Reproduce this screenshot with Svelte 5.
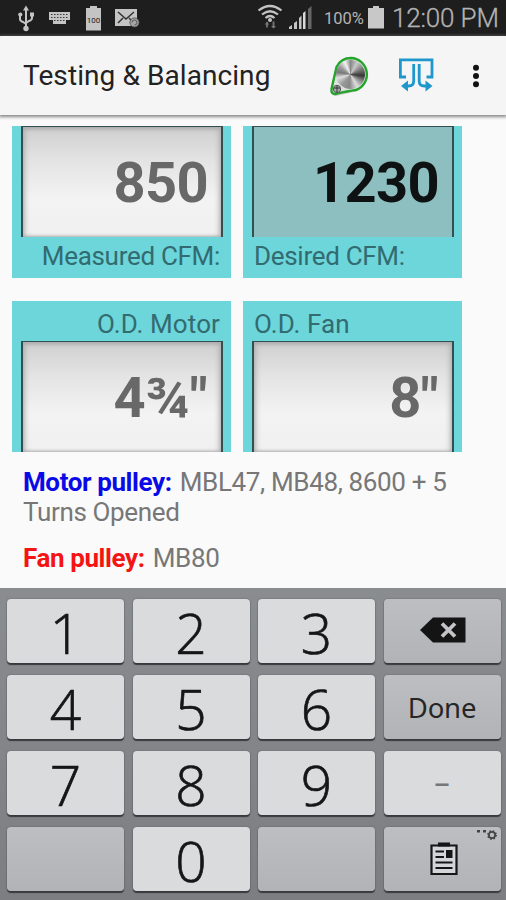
<script>
    import { writable } from 'svelte/store';

    // CFM fields, label sits below the box
    const airflow = [
        { id: 'measured', label: 'Measured CFM:', value: '850', side: 'right' },
        { id: 'desired', label: 'Desired CFM:', value: '1230', side: 'left' },
    ];

    // pulley outside diameters, label sits above the box
    const diameters = [
        { id: 'motor', label: 'O.D. Motor', value: '4¾"', side: 'right' },
        { id: 'fan', label: 'O.D. Fan', value: '8"', side: 'left' },
    ];

    const keys = [
        { type: 'digit', text: '1' },
        { type: 'digit', text: '2' },
        { type: 'digit', text: '3' },
        { type: 'delete' },
        { type: 'digit', text: '4' },
        { type: 'digit', text: '5' },
        { type: 'digit', text: '6' },
        { type: 'done', text: 'Done' },
        { type: 'digit', text: '7' },
        { type: 'digit', text: '8' },
        { type: 'digit', text: '9' },
        { type: 'minus', text: '–' },
        { type: 'blank' },
        { type: 'digit', text: '0' },
        { type: 'blank' },
        { type: 'clipboard' },
    ];

    const selected = writable('desired');
</script>

<div class="screen">
    <div class="status-bar">
        <svg class="status-left" width="160" height="36" viewBox="0 0 160 36">
            <g fill="none" stroke="#c4c4c4" stroke-width="2">
                <path d="M26 8V29M20 15v4q0 2 3 3l3 2M32 14v4q0 2-3 3l-3 2" />
            </g>
            <g fill="#c4c4c4">
                <path d="M26 5.500l3 5h-6z" />
                <circle cx="26" cy="28.500" r="2.700" />
                <circle cx="20.300" cy="14.500" r="2.100" />
                <path d="M30 12.500h4v4h-4z" />
                <path d="M49 12h21v8h-4v4h-13v-4h-4z" />
                <path d="M90 6h7v2h4v22.500H86V8h4z" />
                <path d="M115 9h22v17h-22z" />
            </g>
            <path d="M51 14.500h17M51 17.500h17M54 20.500h11" stroke="#3a3a3a" stroke-width="1" stroke-dasharray="1.500 1.500" />
            <path d="M118 12l8 7 8-7M118 23l5-5M133 22l-4-4" fill="none" stroke="#333" stroke-width="1.500" />
            <circle cx="134.500" cy="22.500" r="4.600" fill="#a5a5a5" stroke="#444" stroke-width="0.800" />
            <path d="M132 22.500a2.500 2.500 0 1 1 2.500 2.500" fill="none" stroke="#555" />
            <text class="tiny" x="93.500" y="22.500" text-anchor="middle">100</text>
        </svg>
        <div class="status-right">
            <svg width="58" height="36" viewBox="256 0 58 36">
                <g fill="none" stroke="#c4c4c4" stroke-width="2.200">
                    <path d="M258.500 10.500q11.500-9 23 0M262 14.500q8-6.500 16 0M265.500 18q4.500-4 9 0" />
                </g>
                <circle cx="270" cy="20" r="2" fill="#c4c4c4" />
                <path d="M264.500 24.500l2.500-2.500 2.500 2.500zM271 26l2.500 2.500 2.500-2.500z" fill="#777" />
                <path d="M267 22v5.500M273.500 21.500v6" stroke="#777" stroke-width="1.800" />
                <path d="M289 29v-2l3-2v4zM294 29v-6l3-2v8zM299 29V18l2.500-2.500V29z" fill="#c4c4c4" />
                <path d="M303 29V13l2.500-2V29z" fill="#d8d8d8" />
                <path d="M308 29V9l3.500-3v23z" fill="#666" />
            </svg>
            <span class="percent">100%</span>
            <svg width="18" height="36" viewBox="0 0 18 36">
                <path d="M6 6h6v2h5v20.500H1V8h5z" fill="#c8c8c8" />
            </svg>
            <span class="clock">12:00 PM</span>
        </div>
    </div>

    <header class="app-bar">
        <h1 class="title">Testing &amp; Balancing</h1>
        <div class="pulley">
            <svg width="44" height="44" viewBox="328 53 44 44">
                <path d="M336.500 68Q341 58.500 351 58.500A16.500 16.500 0 0 1 357 90Q350 92 336 95Q330.500 94.500 331.500 88z" fill="#9a9a9a" opacity="0.450" />
                <path d="M336.500 66Q341 57 351 57A16.500 16.500 0 0 1 356 89Q348 90 335 93Q331 93 331.500 88z" fill="#dce3dc" stroke="#24a52b" stroke-width="2.400" />
                <circle cx="337" cy="88" r="3.700" fill="#aaa" stroke="#555" />
                <path d="M334 87h6M337 85v6" stroke="#333" />
            </svg>
            <span class="disc"></span>
        </div>
        <svg class="duct" width="36" height="36" viewBox="399 57 36 36" fill="none" stroke="#1e98cc" stroke-width="2.800">
            <path d="M406 77h-5.600V59.900H432V77h-5.500" />
            <path d="M413.700 64v17q0 5-5 5H406M419.200 64v17q0 5 5 5H427" />
            <path d="M401 86l7-5.500v11zM432.500 86l-7-5.500v11z" fill="#1e98cc" stroke="none" />
        </svg>
        <svg class="more" width="10" height="26" viewBox="0 0 10 26" fill="#111">
            <circle cx="5" cy="4.700" r="3" />
            <circle cx="5" cy="13" r="3" />
            <circle cx="5" cy="21.300" r="3" />
        </svg>
    </header>

    <main class="content">
        <div class="cards">
            {#each airflow as field}
                <div class="card card-airflow">
                    <div class="value" class:selected={$selected === field.id}>{field.value}</div>
                    <div class="label {field.side}">{field.label}</div>
                </div>
            {/each}
        </div>
        <div class="cards">
            {#each diameters as field}
                <div class="card card-diameter">
                    <div class="label {field.side}">{field.label}</div>
                    <div class="value" class:selected={$selected === field.id}>{field.value}</div>
                </div>
            {/each}
        </div>
        <p class="result"><b class="motor-name">Motor pulley:</b> MBL47, MB48, 8600 + 5<br />Turns Opened</p>
        <p class="result fan-result"><b class="fan-name">Fan pulley:</b> MB80</p>
    </main>

    <div class="keypad">
        {#each keys as key}
            <button class="key {key.type}">
                {#if key.type === 'delete'}
                    <svg width="46" height="26" viewBox="0 0 46 26">
                        <path d="M0 13L13 .5h32.500v25H13z" fill="#141414" />
                        <path d="M22 6.500l13 13M35 6.500l-13 13" stroke="#c3c4c7" stroke-width="3.800" />
                    </svg>
                {:else if key.type === 'clipboard'}
                    <svg width="28" height="34" viewBox="0 0 28 34">
                        <path d="M1.500 3.500h25v28.500h-25z" fill="#d3d5d8" stroke="#151515" stroke-width="2.200" />
                        <path d="M8 .5h12v4H8zM16 8h6.500v8H16z" fill="#151515" />
                        <path d="M5.500 9.500h8.500M5.500 15h8.500M5.500 20.500h17M5.500 26h17" stroke="#151515" stroke-width="2.200" />
                    </svg>
                    <svg class="options" width="22" height="12" viewBox="0 0 22 12">
                        <path d="M1 1h3v2.500H1zM7 1h3v2.500H7z" fill="#444" />
                        <circle cx="16" cy="6" r="3.100" fill="none" stroke="#444" stroke-width="1.800" />
                        <circle cx="16" cy="6" r="4.300" fill="none" stroke="#444" stroke-width="1.200" stroke-dasharray="1.700 1.700" />
                    </svg>
                {:else if key.text}
                    <span>{key.text}</span>
                {/if}
            </button>
        {/each}
    </div>
</div>

<style>
    :global(body) {
        margin: 0;
    }
    .screen {
        width: 506px;
        height: 900px;
        display: flex;
        flex-direction: column;
        overflow: hidden;
        background: #fafafa;
        font-family: Roboto, "Liberation Sans", sans-serif;
    }
    .status-bar {
        height: 36px;
        flex: none;
        display: flex;
        justify-content: space-between;
        background: #1e1e1e;
        color: #b4b4b4;
        box-sizing: border-box;
        border-bottom: 1px solid #090909;
    }
    .status-bar svg {
        flex: none;
    }
    .tiny {
        font-size: 8px;
        font-weight: 400;
        fill: #222;
    }
    .status-right {
        display: flex;
        align-items: flex-start;
        padding-right: 10px;
    }
    .percent {
        width: 43px;
        padding-left: 10px;
        font-size: 16.5px;
        line-height: 38px;
    }
    .clock {
        width: 104px;
        margin-left: 7px;
        font-size: 26px;
        font-weight: 300;
        line-height: 37px;
        letter-spacing: -0.15px;
        white-space: nowrap;
        -webkit-text-stroke: 0.3px #b4b4b4;
    }
    .app-bar {
        height: 79px;
        flex: none;
        display: flex;
        align-items: center;
        background: #f5f5f5;
        box-shadow: 0 1px 3px 1px #888;
    }
    .title {
        width: 305px;
        margin: 0;
        padding: 0 0 0 23px;
        font-size: 28px;
        font-weight: 400;
        line-height: 38px;
        letter-spacing: 0.08px;
        color: #222;
        white-space: nowrap;
    }
    .pulley {
        position: relative;
        width: 44px;
        height: 44px;
    }
    .disc {
        position: absolute;
        left: 8px;
        top: 6px;
        width: 29px;
        height: 29px;
        border-radius: 50%;
        background: conic-gradient(#888, #c9c9c9 30deg, #777 65deg, #383838 95deg, #888 120deg, #ddd 150deg, #888 185deg, #999 220deg, #ddd 255deg, #777 280deg, #999 305deg, #f2f2f2 335deg, #888);
    }
    .duct {
        margin-left: 27px;
        margin-bottom: 2px;
    }
    .more {
        margin-left: 36px;
    }
    .content {
        flex: 1;
        padding: 11px 12px 0;
    }
    .cards {
        display: flex;
        gap: 12px;
        margin-bottom: 23px;
    }
    .card {
        width: 219px;
        height: 152px;
        box-sizing: border-box;
        padding: 0 8px 0 9px;
        background: #6cd6da;
    }
    .card-diameter {
        height: 151px;
        padding-top: 1px;
    }
    .value {
        height: 111px;
        box-sizing: border-box;
        padding-right: 14px;
        border: solid #344f52;
        border-width: 1px 2px 0;
        background: linear-gradient(#cfcfcf, #e3e3e3 30%, #f3f3f3 65%, #f0f0f0);
        box-shadow: inset 0 3px 4px -1px #aaa, inset 4px 0 6px -3px #aaa, inset -4px 0 6px -3px #aaa, inset 0 -3px 3px -2px #bbb;
        font-size: 56px;
        font-weight: 700;
        line-height: 113px;
        letter-spacing: -0.6px;
        text-align: right;
        color: #686868;
    }
    .card-airflow .value {
        padding-right: 13px;
    }
    .value.selected {
        background: #8dbfc0;
        box-shadow: none;
        color: #0e1213;
    }
    .label {
        height: 39px;
        padding: 0 3px 0 2px;
        font-size: 26px;
        font-weight: 400;
        line-height: 39px;
        letter-spacing: -0.3px;
        color: #326b70;
        white-space: nowrap;
    }
    .card-diameter .label {
        line-height: 45px;
        letter-spacing: 0.1px;
    }
    .label.right {
        text-align: right;
    }
    .result {
        margin: -8px 11px 0;
        font-size: 26px;
        line-height: 30px;
        letter-spacing: -0.35px;
        color: #777;
        white-space: nowrap;
    }
    .result b {
        margin-right: 2px;
        letter-spacing: -0.4px;
    }
    .fan-result {
        margin-top: 16px;
    }
    .motor-name {
        color: #0a0ae6;
    }
    .fan-name {
        color: #f51414;
    }
    .keypad {
        height: 312px;
        flex: none;
        box-sizing: border-box;
        display: grid;
        grid-template-columns: repeat(4, 117px);
        grid-auto-rows: 64px;
        column-gap: 8.5px;
        row-gap: 12px;
        padding: 11px 7px 0;
        background: linear-gradient(#8a8d90, #7c7e81);
    }
    .key {
        position: relative;
        display: flex;
        align-items: center;
        justify-content: center;
        padding: 0;
        border: none;
        border-radius: 4px;
        background: linear-gradient(#bcbec1, #b1b3b7);
        box-shadow: 0 2px 1px #37393c, 0 0 2px #606266;
        color: #161616;
    }
    .digit {
        background: #dadbdd;
        font-family: "Open Sans", "Noto Sans", sans-serif;
        font-size: 55px;
        font-weight: 300;
        line-height: 64px;
        -webkit-text-stroke: 0.7px #161616;
    }
    .digit span {
        padding-top: 3px;
    }
    .delete {
        padding: 0 0 2px 1px;
    }
    .clipboard {
        padding-left: 4px;
    }
    .done {
        font-family: "Noto Sans", sans-serif;
        font-size: 27.5px;
        letter-spacing: -0.2px;
        color: #262626;
    }
    .minus {
        padding-bottom: 4px;
        background: #dadbdd;
        font-family: "Noto Sans", sans-serif;
        font-size: 31px;
        color: #777;
    }
    .options {
        position: absolute;
        top: 2px;
        right: 3px;
    }
</style>
